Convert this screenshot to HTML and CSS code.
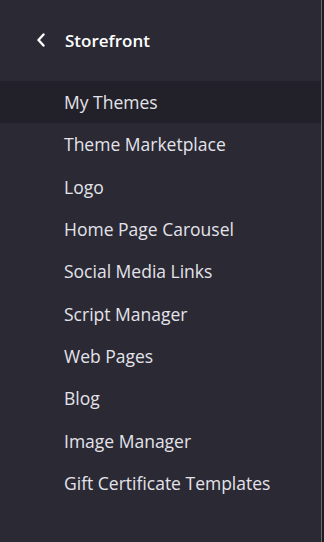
FILE: index.html
```html
<!DOCTYPE html>
<html lang="en">
<head>
    <meta charset="UTF-8">
    <meta name="viewport" content="width=device-width, initial-scale=1.0">
    <title>Storefront</title>
    <link rel="stylesheet" href="styles.css">
</head>
<body>
    <nav class="sidebar">
        <div class="sidebar-header">
            <svg class="back-icon" width="10" height="14" viewBox="0 0 10 14">
                <path d="M7.5 1.5 L2.5 7 L7.5 12.5" fill="none" stroke="#ffffff" stroke-width="2.4" stroke-linecap="round" stroke-linejoin="round"/>
            </svg>
            <span class="sidebar-title">Storefront</span>
        </div>
        <ul class="menu">
            <li class="menu-item active">My Themes</li>
            <li class="menu-item">Theme Marketplace</li>
            <li class="menu-item">Logo</li>
            <li class="menu-item">Home Page Carousel</li>
            <li class="menu-item">Social Media Links</li>
            <li class="menu-item">Script Manager</li>
            <li class="menu-item">Web Pages</li>
            <li class="menu-item">Blog</li>
            <li class="menu-item">Image Manager</li>
            <li class="menu-item">Gift Certificate Templates</li>
        </ul>
    </nav>
</body>
</html>
```

FILE: styles.css
```css
body {
    margin: 0;
    padding: 0;
    background-color: #1e1d24;
    font-family: 'Open Sans', sans-serif;
    height: 542px;
    overflow: hidden;
}

.sidebar {
    width: 321px;
    height: 542px;
    background-color: #2a2934;
    border-right: 1px solid #6a6972;
    color: #e4e3ea;
}

.sidebar-header {
    display: flex;
    align-items: center;
    height: 81px;
    padding-left: 36px;
}

.back-icon {
    margin-right: 19px;
    margin-top: -1px;
}

.sidebar-title {
    font-size: 17px;
    font-weight: 600;
    color: #ffffff;
    margin-top: -1px;
}

.menu {
    list-style: none;
    margin: 0;
    padding: 0;
}

.menu-item {
    height: 42.33px;
    line-height: 43px;
    padding-left: 64px;
    font-size: 17.5px;
}

.menu-item.active {
    background-color: #222129;
}
```
